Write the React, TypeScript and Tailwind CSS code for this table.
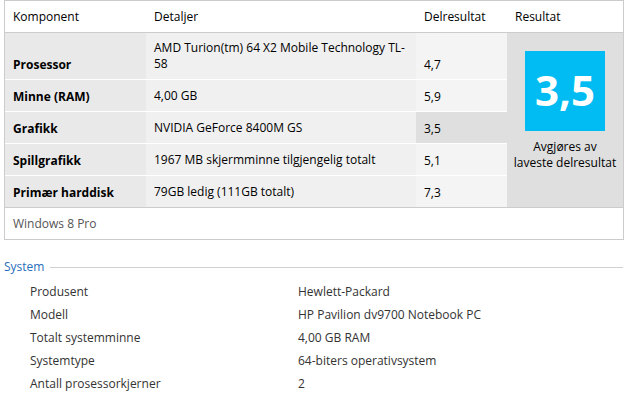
import React from "react";

const rows = [
  { label: "Prosessor", detail: ["AMD Turion(tm) 64 X2 Mobile Technology TL-", "58"], score: "4,7", tall: true, low: false },
  { label: "Minne (RAM)", detail: ["4,00 GB"], score: "5,9", tall: false, low: false },
  { label: "Grafikk", detail: ["NVIDIA GeForce 8400M GS"], score: "3,5", tall: false, low: true },
  { label: "Spillgrafikk", detail: ["1967 MB skjermminne tilgjengelig totalt"], score: "5,1", tall: false, low: false },
  { label: "Primær harddisk", detail: ["79GB ledig (111GB totalt)"], score: "7,3", tall: false, low: false },
];

const sys = [
  ["Produsent", "Hewlett-Packard"],
  ["Modell", "HP Pavilion dv9700 Notebook PC"],
  ["Totalt systemminne", "4,00 GB RAM"],
  ["Systemtype", "64-biters operativsystem"],
  ["Antall prosessorkjerner", "2"],
];

export default function App() {
  return (
    <div className="w-[631px] h-[393px] bg-white text-[12px] text-black font-['Open_Sans','Liberation_Sans',sans-serif] overflow-hidden">
      <div className="ml-[4px] w-[620px] border border-[#cccccc]">
        <div className="grid grid-cols-[141px_270px_91px_116px] h-[32px] border-b border-[#cccccc] items-center">
          <div className="pl-[8px]">Komponent</div>
          <div className="pl-[8px]">Detaljer</div>
          <div className="pl-[8px]">Delresultat</div>
          <div className="pl-[8px]">Resultat</div>
        </div>
        <div className="grid grid-cols-[141px_270px_91px_116px] grid-rows-[46px_31px_31px_31px_31px] gap-y-px bg-white">
          {rows.map((r, i) => (
            <React.Fragment key={r.label}>
              <div className="bg-[#e9e9e9] flex items-end pl-[8px] pb-[7px] font-bold leading-[15px]">
                {r.label}
              </div>
              <div className="bg-[#f0f0f0] flex flex-col justify-end pl-[8px] pb-[7px] leading-[16px]">
                {r.detail.map((d) => (
                  <div key={d}>{d}</div>
                ))}
              </div>
              <div className={`${r.low ? "bg-[#dfdfdf]" : "bg-[#f4f4f4]"} flex items-end pl-[8px] pb-[7px] leading-[15px]`}>
                {r.score}
              </div>
              {i === 0 && (
                <div className="row-span-5 bg-[#dfdfdf] flex flex-col items-center pt-[18px]">
                  <div className="w-[80px] h-[80px] bg-[#00bcf2] flex items-center justify-center text-white text-[42px] font-bold leading-none pb-[2px]">
                    3,5
                  </div>
                  <div className="mt-[8px] text-center leading-[16px]">
                    Avgjøres av
                    <br />
                    laveste delresultat
                  </div>
                </div>
              )}
            </React.Fragment>
          ))}
        </div>
        <div className="h-[32px] border-t border-[#cccccc] flex items-center pl-[8px] text-[#555555]">
          Windows 8 Pro
        </div>
      </div>
      <div className="mt-[19px] flex items-center h-[16px] pl-[4px] w-[623px]">
        <span className="text-[#2a6ebb]">System</span>
        <div className="flex-1 ml-[6px] h-px bg-[#d0d0d0]"></div>
      </div>
      <div className="mt-[5px] pl-[30px] text-[#333333]">
        {sys.map(([k, v]) => (
          <div key={k} className="grid grid-cols-[268px_1fr] h-[23px] items-center">
            <div>{k}</div>
            <div>{v}</div>
          </div>
        ))}
      </div>
    </div>
  );
}
